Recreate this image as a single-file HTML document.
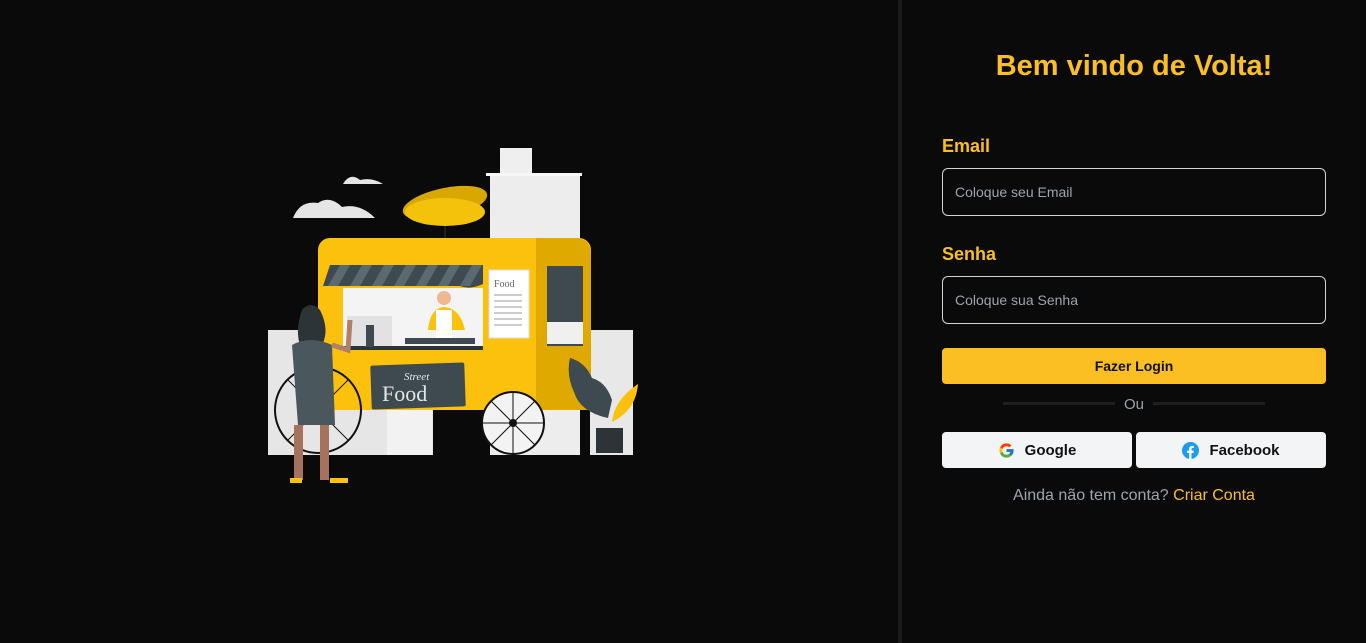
<!DOCTYPE html>
<html><head><meta charset="utf-8"><style>
*{box-sizing:border-box;margin:0;padding:0}
body{width:1366px;height:643px;background:#0a0a0a;font-family:"Liberation Sans",Arial,sans-serif;position:relative;overflow:hidden}
.left{position:absolute;left:0;top:0;width:898px;height:643px;background:#0a0a0a}
.divider{position:absolute;left:898px;top:0;width:4px;height:643px;background:#1c1c1c}
.right{position:absolute;left:902px;top:0;width:464px;height:643px;background:#0a0a0a}
h1{position:absolute;left:0;width:464px;top:50px;text-align:center;color:#fbbf24;font-size:29px;font-weight:bold}
.lbl{position:absolute;left:40px;color:#fbbf24;font-size:18px;font-weight:bold}
.inp{position:absolute;left:40px;width:384px;height:48px;border:1px solid #d4d4d4;border-radius:6px;color:#9ca3af;font-size:14px;padding:15px 0 0 12px}
.btn{position:absolute;left:40px;top:348px;width:384px;height:36px;background:#fbbf24;border-radius:4px;color:#111;font-weight:bold;font-size:14px;text-align:center;line-height:36px}
.line{position:absolute;top:402px;height:3px;width:112px;background:#1f1f1f}
.ou{position:absolute;left:0;width:464px;top:396px;text-align:center;color:#9ca3af;font-size:15px}
.soc{position:absolute;top:432px;height:36px;background:#f3f4f6;border-radius:4px;color:#111;font-weight:bold;font-size:15px;display:flex;align-items:center;justify-content:center;gap:10px}
.bot{position:absolute;left:0;width:464px;top:487px;text-align:center;color:#9ca3af;font-size:16px}
.bot span{color:#fbbf24}
</style></head><body>
<div class="left">
<svg width="898" height="643" style="position:absolute;left:0;top:0">
 <path d="M293 218 Q300 200 318 203 Q330 195 342 207 Q360 203 375 218 Z" fill="#e5e5e5"/>
 <path d="M343 184 Q350 172 360 180 Q372 177 383 184 Z" fill="#e5e5e5"/>
 <rect x="500" y="148" width="32" height="28" fill="#efefef"/>
 <rect x="490" y="173" width="90" height="282" fill="#ededed"/>
 <rect x="486" y="173" width="96" height="3" fill="#f7f7f7"/>
 <rect x="268" y="330" width="165" height="125" fill="#e6e6e6"/>
 <rect x="590" y="330" width="43" height="125" fill="#e8e8e8"/>
 <rect x="387" y="408" width="45" height="47" fill="#f2f2f2"/>
 <line x1="445" y1="220" x2="445" y2="238" stroke="#333" stroke-width="1"/>
 <ellipse cx="445" cy="203" rx="43" ry="15" fill="#d8a800" transform="rotate(-12 445 203)"/>
 <ellipse cx="445" cy="212" rx="40" ry="14" fill="#f5c20b"/>
 <rect x="318" y="238" width="273" height="172" rx="12" fill="#fcc10d"/>
 <path d="M536 238 H575 Q591 238 591 256 V410 H536 Z" fill="#e0a900"/>
 <rect x="547" y="266" width="36" height="80" fill="#3e4a50"/>
 <rect x="547" y="322" width="36" height="22" fill="#f0f0f0"/>
 <rect x="343" y="288" width="140" height="60" fill="#f4f4f4"/>
 <rect x="347" y="316" width="45" height="30" fill="#e2e2e2"/>
 <path d="M330 265 H483 V284 Q470 290 460 286 H323 Z" fill="#3e4a50"/>
 <g fill="#5b6a70"><polygon points="340,265 350,265 338,286 328,286"/><polygon points="362,265 372,265 360,286 350,286"/><polygon points="384,265 394,265 382,286 372,286"/><polygon points="406,265 416,265 404,286 394,286"/><polygon points="428,265 438,265 426,286 416,286"/><polygon points="450,265 460,265 448,286 438,286"/><polygon points="472,265 482,265 470,286 460,286"/></g>
 <circle cx="444" cy="298" r="7" fill="#f0b890"/>
 <path d="M428 330 Q430 308 444 307 Q460 308 465 330 Z" fill="#fcc10d"/>
 <rect x="436" y="310" width="16" height="28" fill="#fff"/>
 <rect x="405" y="338" width="70" height="6" fill="#3e4a50"/>
 <rect x="343" y="346" width="140" height="4" fill="#2d3438"/>
 <rect x="366" y="325" width="8" height="22" fill="#3e4a50"/>
 <rect x="489" y="270" width="40" height="68" fill="#fff" stroke="#ddd"/>
 <text x="494" y="287" font-size="10" fill="#666" font-family="Liberation Serif">Food</text>
 <g stroke="#999" stroke-width="1"><line x1="494" y1="295" x2="522" y2="295"/><line x1="494" y1="301" x2="522" y2="301"/><line x1="494" y1="307" x2="522" y2="307"/><line x1="494" y1="313" x2="522" y2="313"/><line x1="494" y1="319" x2="522" y2="319"/><line x1="494" y1="325" x2="522" y2="325"/></g>
 <rect x="371" y="364" width="94" height="44" rx="2" fill="#3e4a50" transform="rotate(-2 418 386)"/>
 <text x="404" y="380" font-size="11" fill="#e5e5e5" font-style="italic" font-family="Liberation Serif">Street</text>
 <text x="382" y="401" font-size="22" fill="#e5e5e5" font-family="Liberation Serif">Food</text>
 <circle cx="318" cy="410" r="43" fill="none" stroke="#111" stroke-width="2"/>
 <line x1="288" y1="380" x2="348" y2="440" stroke="#111"/><line x1="348" y1="380" x2="288" y2="440" stroke="#111"/>
 <circle cx="513" cy="423" r="31" fill="#f3f3f3" stroke="#111" stroke-width="2"/>
 <line x1="491" y1="401" x2="535" y2="445" stroke="#111"/><line x1="535" y1="401" x2="491" y2="445" stroke="#111"/><line x1="513" y1="392" x2="513" y2="454" stroke="#111"/><line x1="482" y1="423" x2="544" y2="423" stroke="#111"/>
 <circle cx="513" cy="423" r="4" fill="#111"/>
 <path d="M608 418 Q580 412 574 392 Q566 375 570 358 Q585 362 592 378 Q606 382 612 400 Z" fill="#3e4a50"/>
 <path d="M612 422 Q614 400 638 384 Q636 410 612 422 Z" fill="#fcc10d"/>
 <rect x="596" y="428" width="27" height="25" fill="#2d3438"/>
 <path d="M302 310 Q310 300 320 310 Q330 330 322 345 L300 345 Q295 330 302 310Z" fill="#2d3438"/>
 <path d="M292 345 Q310 335 332 345 L335 425 L298 425 Z" fill="#4a575c"/>
 <path d="M332 345 L348 350 L350 320" stroke="#b08068" stroke-width="5" fill="none"/>
 <rect x="294" y="425" width="9" height="55" fill="#a5735d"/>
 <rect x="320" y="425" width="9" height="55" fill="#a5735d"/>
 <rect x="290" y="478" width="12" height="5" fill="#fcc10d"/>
 <rect x="330" y="478" width="18" height="5" fill="#fcc10d"/>
</svg>
</div>
<div class="divider"></div>
<div class="right">
 <h1>Bem vindo de Volta!</h1>
 <div class="lbl" style="top:136px">Email</div>
 <div class="inp" style="top:168px">Coloque seu Email</div>
 <div class="lbl" style="top:244px">Senha</div>
 <div class="inp" style="top:276px">Coloque sua Senha</div>
 <div class="btn">Fazer Login</div>
 <div class="line" style="left:101px"></div>
 <div class="line" style="left:251px"></div>
 <div class="ou">Ou</div>
 <div class="soc" style="left:40px;width:190px">
  <svg width="17" height="17" viewBox="0 0 48 48"><path fill="#FFC107" d="M43.6 20H24v8h11.3C33.7 32.7 29.3 36 24 36c-6.6 0-12-5.4-12-12s5.4-12 12-12c3 0 5.8 1.1 7.9 3l5.7-5.7C34 6 29.3 4 24 4 12.9 4 4 12.9 4 24s8.9 20 20 20 20-8.9 20-20c0-1.3-.1-2.7-.4-4z"/><path fill="#FF3D00" d="M6.3 14.7l6.6 4.8C14.7 15.1 19 12 24 12c3 0 5.8 1.1 7.9 3l5.7-5.7C34 6 29.3 4 24 4 16.3 4 9.7 8.3 6.3 14.7z"/><path fill="#4CAF50" d="M24 44c5.2 0 9.9-2 13.4-5.2l-6.2-5.2C29.2 35.1 26.7 36 24 36c-5.2 0-9.6-3.3-11.3-8l-6.5 5C9.5 39.6 16.2 44 24 44z"/><path fill="#1976D2" d="M43.6 20H24v8h11.3c-.8 2.2-2.2 4.2-4.1 5.6l6.2 5.2C37 39.2 44 34 44 24c0-1.3-.1-2.7-.4-4z"/></svg>
  Google</div>
 <div class="soc" style="left:234px;width:190px">
  <svg width="17" height="17" viewBox="0 0 24 24"><circle cx="12" cy="12" r="12" fill="#1b9cf0"/><path d="M13.4 24v-8.5h2.8l.4-3.3h-3.2v-2.1c0-.9.3-1.6 1.6-1.6h1.7V5.6c-.3 0-1.3-.1-2.5-.1-2.5 0-4.1 1.5-4.1 4.2v2.5H7.3v3.3h2.8V24z" fill="#fff"/></svg>
  Facebook</div>
 <div class="bot">Ainda não tem conta? <span>Criar Conta</span></div>
</div>
</body></html>
